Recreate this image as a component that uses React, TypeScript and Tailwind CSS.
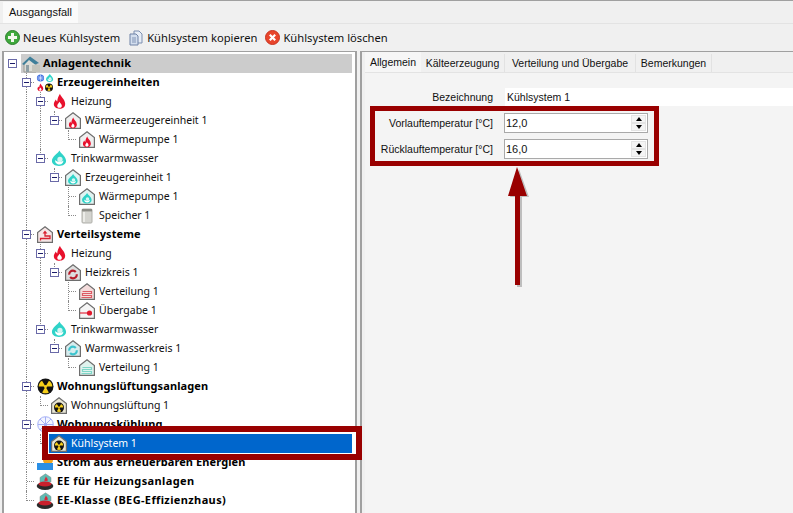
import React from "react";

const FONT = "font-['Noto_Sans','Liberation_Sans',sans-serif]";
const ARIAL = "font-['Liberation_Sans',sans-serif]";

type IconName =
  | "root" | "combo" | "flame" | "drop" | "hFlame" | "hDrop" | "tank" | "hUp" | "hCircleRed"
  | "hDist" | "hOut" | "hCircleTeal" | "hDistTeal" | "fan" | "hFan" | "snow" | "power" | "ee";

function Flame({ x = 0, y = 0, s = 1 }: { x?: number; y?: number; s?: number }) {
  return (
    <g transform={`translate(${x} ${y}) scale(${s})`}>
      <path d="M8.5 0C9 3 13.5 5.5 14 10C14.4 14 11.5 16 8 16C4.5 16 1.6 14 2 10.5C2.2 8.5 3.3 7.5 4 6C4.6 7 5 8 5.6 8.3C5.8 5 7 2.5 8.5 0Z" fill="#e8112d" />
      <path d="M8 8.5C8.6 10 10.6 11 10.5 13C10.4 14.4 9.2 15 8 15C6.8 15 5.6 14.4 5.6 13C5.6 11.2 7.3 10.2 8 8.5Z" fill="#fff" />
    </g>
  );
}

function Drop({ x = 0, y = 0, s = 1 }: { x?: number; y?: number; s?: number }) {
  return (
    <g transform={`translate(${x} ${y}) scale(${s})`}>
      <path d="M9 0C10 3 16 6 16 11C16 14.5 13 16.5 8.5 16.5C4 16.5 1 14.5 1 11C1 6.5 7 3.5 9 0Z" fill="#2fd3c8" />
      <path d="M4.5 10C4 13 6.4 14.8 9 14.8C11.6 14.8 13.4 13 13.2 10.6C11.5 12.6 7.5 13 4.5 10Z" fill="#fff" />
      <circle cx="9.5" cy="9.5" r="2.8" fill="#d4f6f3" />
    </g>
  );
}

function Fan({ cx, cy, r }: { cx: number; cy: number; r: number }) {
  const blade = "M0 0L-0.42 -0.74A0.85 0.85 0 0 1 0.42 -0.74Z";
  return (
    <g transform={`translate(${cx} ${cy}) scale(${r})`}>
      <circle r="1" fill="#111" />
      {[60, 180, 300].map((a) => (
        <path key={a} d={blade} fill="#f6cf1a" transform={`rotate(${a})`} />
      ))}
      <circle r="0.2" fill="#f6cf1a" />
    </g>
  );
}

function House({ fill = "#f2f2f2", children }: { fill?: string; children?: React.ReactNode }) {
  return (
    <svg width="16" height="17" viewBox="0 0 16 17" className="block">
      <path d="M8 0.8L15.4 6.5V16.3H0.6V6.5Z" fill={fill} stroke="#6d6d6d" strokeWidth="1.2" />
      {children}
    </svg>
  );
}

function Icon({ name }: { name: IconName }) {
  switch (name) {
    case "root":
      return (
        <svg width="20" height="18" viewBox="0 0 20 18" className="block">
          <path d="M3 17V8L9 3L15 8V17Z" fill="#dcdcd6" stroke="#9a9a94" />
          <path d="M1 9L9 1.5L18 8L14 9.5L8 5L3 10Z" fill="#3f7f9a" />
          <rect x="11" y="10" width="8" height="7" fill="#c4c4bc" />
          <path d="M5 10H8V17H5Z" fill="#8f9fa5" />
        </svg>
      );
    case "combo":
      return (
        <svg width="18" height="18" viewBox="0 0 18 18" className="block">
          <circle cx="4.5" cy="4" r="3.6" fill="#3f6fe0" />
          <path d="M4.5 0.8V7.2M1.4 4H7.6M2.3 1.8L6.7 6.2M6.7 1.8L2.3 6.2" stroke="#d9e4ff" strokeWidth="0.7" />
          <Drop x={9.5} y={0} s={0.48} />
          <Flame x={0.5} y={9.5} s={0.48} />
          <Fan cx={13} cy={13.5} r={4} />
        </svg>
      );
    case "flame":
      return (
        <svg width="15" height="17" viewBox="0 0 16 16.5" className="block">
          <Flame />
        </svg>
      );
    case "drop":
      return (
        <svg width="16" height="17" viewBox="0 0 17 17" className="block">
          <Drop />
        </svg>
      );
    case "hFlame":
      return (
        <House fill="#efefef">
          <Flame x={2.6} y={5.6} s={0.66} />
        </House>
      );
    case "hDrop":
      return (
        <House fill="#dff4f2">
          <Drop x={2.4} y={5} s={0.64} />
        </House>
      );
    case "tank":
      return (
        <svg width="12" height="16" viewBox="0 0 12 16" className="block">
          <rect x="1" y="1" width="10" height="14" rx="1" fill="#d4d4cf" stroke="#b0b0aa" />
          <rect x="1" y="1" width="10" height="2.4" fill="#8c8c86" />
          <rect x="2" y="4" width="2" height="10" fill="#ecece8" />
        </svg>
      );
    case "hUp":
      return (
        <House fill="#f6e6e6">
          <path d="M8 4.5L10.4 7.5H5.6Z" fill="#d8202f" />
          <path d="M8 7V10H13V12.5H3.5V14.5" fill="none" stroke="#d8202f" strokeWidth="1.3" />
        </House>
      );
    case "hDist":
      return (
        <House fill="#f4dcdc">
          <path d="M3.5 8.5H12.5V10.5H3.5V12.5H12.5V14.5H2.5" fill="none" stroke="#dc5a64" strokeWidth="1.2" />
        </House>
      );
    case "hOut":
      return (
        <House fill="#f5f5f5">
          <path d="M1 11H10" stroke="#e01a2e" strokeWidth="1.1" />
          <circle cx="10.5" cy="11" r="2.6" fill="#e01a2e" />
        </House>
      );
    case "hCircleRed":
      return (
        <House fill="#dedede">
          <circle cx="8" cy="10.5" r="3.8" fill="none" stroke="#b81c2a" strokeWidth="2.2" strokeDasharray="9 2.5" />
        </House>
      );
    case "hCircleTeal":
      return (
        <House fill="#d6ecee">
          <circle cx="8" cy="10.5" r="3.8" fill="none" stroke="#3cc4ce" strokeWidth="2.2" strokeDasharray="9 2.5" />
        </House>
      );
    case "hDistTeal":
      return (
        <House fill="#dff3ee">
          <path d="M3.5 8.5H12.5V10.5H3.5V12.5H12.5V14.5H2.5" fill="none" stroke="#7fd6c8" strokeWidth="1.2" />
        </House>
      );
    case "fan":
      return (
        <svg width="17" height="17" viewBox="0 0 17 17" className="block">
          <Fan cx={8.5} cy={8.5} r={8} />
        </svg>
      );
    case "hFan":
      return (
        <House fill="#e9e6d4">
          <Fan cx={8} cy={10.6} r={5} />
        </House>
      );
    case "snow":
      return (
        <svg width="17" height="17" viewBox="0 0 17 17" className="block">
          <circle cx="8.5" cy="8.5" r="7.8" fill="#f2f4ff" stroke="#a3aff5" />
          <path d="M8.5 1V16M1 8.5H16M3 3L14 14M14 3L3 14" stroke="#a3aff5" strokeWidth="1" />
        </svg>
      );
    case "power":
      return (
        <svg width="18" height="17" viewBox="0 0 18 17" className="block">
          <circle cx="12" cy="6" r="5" fill="#f2a51e" />
          <rect x="1" y="9" width="16" height="7" fill="#2a8fe6" />
        </svg>
      );
    default:
      return (
        <svg width="18" height="18" viewBox="0 0 18 18" className="block">
          <path d="M4 9V4.5L9.5 0.8L15 4.5V9Z" fill="#5fbcb4" stroke="#8a8a8a" strokeWidth="0.5" />
          <path d="M10 3C10 5 12.5 5.5 11.5 8H8.5C8 6.5 9.6 5 10 3Z" fill="#d82a3a" />
          <ellipse cx="9" cy="13" rx="8.3" ry="4" fill="#2a2a2a" />
          <ellipse cx="9" cy="11" rx="6.5" ry="2.6" fill="#c9202c" />
        </svg>
      );
  }
}

type Node = { t: string; i: IconName; b?: boolean; sel?: boolean; gray?: boolean; wide?: boolean; c?: Node[] };

const tree: Node = {
  t: "Anlagentechnik", i: "root", b: true, gray: true,
  c: [
    {
      t: "Erzeugereinheiten", i: "combo", b: true,
      c: [
        { t: "Heizung", i: "flame", c: [{ t: "Wärmeerzeugereinheit 1", i: "hFlame", c: [{ t: "Wärmepumpe 1", i: "hFlame" }] }] },
        {
          t: "Trinkwarmwasser", i: "drop",
          c: [{ t: "Erzeugereinheit 1", i: "hDrop", c: [{ t: "Wärmepumpe 1", i: "hDrop" }, { t: "Speicher 1", i: "tank" }] }],
        },
      ],
    },
    {
      t: "Verteilsysteme", i: "hUp", b: true,
      c: [
        {
          t: "Heizung", i: "flame",
          c: [{ t: "Heizkreis 1", i: "hCircleRed", c: [{ t: "Verteilung 1", i: "hDist" }, { t: "Übergabe 1", i: "hOut" }] }],
        },
        {
          t: "Trinkwarmwasser", i: "drop",
          c: [{ t: "Warmwasserkreis 1", i: "hCircleTeal", c: [{ t: "Verteilung 1", i: "hDistTeal" }] }],
        },
      ],
    },
    { t: "Wohnungslüftungsanlagen", i: "fan", b: true, c: [{ t: "Wohnungslüftung 1", i: "hFan" }] },
    { t: "Wohnungskühlung", i: "snow", b: true, c: [{ t: "Kühlsystem 1", i: "hFan", sel: true }] },
    { t: "Strom aus erneuerbaren Energien", i: "power", b: true },
    { t: "EE für Heizungsanlagen", i: "ee", b: true, wide: true },
    { t: "EE-Klasse (BEG-Effizienzhaus)", i: "ee", b: true, wide: true },
  ],
};

type Row = { n: Node; guides: boolean[]; last: boolean; depth: number };

function flatten(n: Node, guides: boolean[], last: boolean, depth: number, out: Row[]) {
  out.push({ n, guides, last, depth });
  const kids = n.c ?? [];
  kids.forEach((k, i) => flatten(k, depth === 0 ? [false] : [...guides, !last], i === kids.length - 1, depth + 1, out));
  return out;
}

const rows = flatten(tree, [], true, 0, []);

function TreeRow({ r }: { r: Row }) {
  const { n, depth, guides, last } = r;
  return (
    <div className="flex h-[19px] items-center">
      {guides.map((g, i) => (
        <div key={i} className="h-full w-[14px] shrink-0">
          {g && <div className="h-full w-[8px] border-r border-dotted border-[#8a8a8a]" />}
        </div>
      ))}
      <div className="relative h-full w-[14px] shrink-0">
        {depth > 0 && (
          <>
            <div className={`absolute left-0 top-0 w-[8px] border-r border-dotted border-[#8a8a8a] ${last ? "h-[10px]" : "h-full"}`} />
            <div className="absolute left-[8px] top-[9px] h-0 w-[7px] border-t border-dotted border-[#8a8a8a]" />
          </>
        )}
        {n.c && (
          <div className="absolute left-[3px] top-[5px] flex h-[9px] w-[9px] items-center justify-center border border-[#6a6aa8] bg-white">
            <div className="h-px w-[5px] bg-[#1c1c6a]" />
          </div>
        )}
      </div>
      <div className={`ml-[2px] flex h-full min-w-0 flex-1 items-center ${n.sel ? "bg-[#0066cc] text-white" : n.gray ? "bg-[#cccccc] text-black" : "text-[#101010]"}`}>
        <div className="flex w-[22px] shrink-0 items-center justify-center pr-[2px]">
          <Icon name={n.i} />
        </div>
        <span className={`whitespace-nowrap leading-none ${n.b ? "mb-[2px] text-[11px] font-bold text-black" : "text-[10.5px]"} ${n.wide ? "tracking-[0.38px]" : n.b ? "tracking-[0.1px]" : ""} ${n.sel ? "text-white" : ""}`}>{n.t}</span>
      </div>
    </div>
  );
}

function Spin({ value }: { value: string }) {
  return (
    <div className="flex h-[20px] w-[144px] items-center justify-between border border-[#a9a9a9] bg-white pl-[1px] pr-[1px]">
      <span className="text-[11px] leading-none text-[#111]">{value}</span>
      <div className="flex h-[16px] w-[15px] flex-col justify-between">
        <div className="flex h-[8px] items-center justify-center border border-[#e4e4e4] bg-[#f4f4f4]">
          <div className="h-0 w-0 border-x-[3px] border-b-[4px] border-x-transparent border-b-black" />
        </div>
        <div className="flex h-[8px] items-center justify-center border border-[#e4e4e4] bg-[#f4f4f4]">
          <div className="h-0 w-0 border-x-[3px] border-t-[4px] border-x-transparent border-t-black" />
        </div>
      </div>
    </div>
  );
}

export default function App() {
  return (
    <div className={`relative flex h-[513px] w-[793px] flex-col overflow-hidden border-t border-[#a0a0a0] bg-[#f0f0f0] text-[12px] text-[#111] ${FONT}`}>
      <div className="flex h-[23px] items-end border-b border-[#e3e3e3] pl-[3px] pt-[2px]">
        <div className={`flex h-[21px] w-[75px] items-center justify-center bg-[#fafafa] text-[11px] leading-none ${ARIAL}`}>Ausgangsfall</div>
      </div>
      <div className="flex h-[27px] items-center gap-[8px] pl-[5px] text-[11.2px] leading-none">
        <div className="flex items-center gap-[3px]">
          <svg width="15" height="15" viewBox="0 0 15 15" className="block">
            <circle cx="7.5" cy="7.5" r="7" fill="#3fa93c" stroke="#2b7f2b" />
            <path d="M6 3H9V6H12V9H9V12H6V9H3V6H6Z" fill="#f3f8ee" />
          </svg>
          <span>Neues Kühlsystem</span>
        </div>
        <div className="flex items-center gap-[3px]">
          <svg width="16" height="16" viewBox="0 0 16 16" className="block">
            <path d="M6 1H11L14 4V13H6Z" fill="#e7edf6" stroke="#7c8fb0" />
            <path d="M2 4H8L10 6V15H2Z" fill="#d3deee" stroke="#6f82a6" />
            <path d="M4 8H8M4 10H8M4 12H8" stroke="#8194b5" />
          </svg>
          <span>Kühlsystem kopieren</span>
        </div>
        <div className="flex items-center gap-[3px]">
          <svg width="15" height="15" viewBox="0 0 15 15" className="block">
            <circle cx="7.5" cy="7.5" r="7" fill="#e8452c" stroke="#c8331f" />
            <path d="M4.8 4.8L10.2 10.2M10.2 4.8L4.8 10.2" stroke="#fff" strokeWidth="2.2" />
          </svg>
          <span>Kühlsystem löschen</span>
        </div>
      </div>
      <div className="flex min-h-0 flex-1 gap-[3px] pl-[2px]">
        <div className="h-full w-[355px] overflow-hidden border-x-2 border-t border-[#a0a0a0] bg-white pl-[1px] pt-[2px]">
          <div className="w-[347px]">
            {rows.map((r, i) => (
              <TreeRow key={i} r={r} />
            ))}
          </div>
        </div>
        <div className={`flex h-full min-w-0 flex-1 flex-col border-l-2 border-t border-[#a0a0a0] ${ARIAL}`}>
          <div className="flex h-[20px] items-end pl-[3px] text-[10.5px] leading-none">
            <div className="flex h-[20px] w-[56px] items-center justify-center bg-[#f6f6f6]">Allgemein</div>
            <div className="flex h-[18px] w-[84px] items-center justify-center border-r border-[#e2e2e2] pt-[1px]">Kälteerzeugung</div>
            <div className="flex h-[18px] w-[131px] items-center justify-center border-r border-[#e2e2e2] pt-[1px]">Verteilung und Übergabe</div>
            <div className="flex h-[18px] w-[76px] items-center justify-center border-r border-[#e2e2e2] pt-[1px]">Bemerkungen</div>
          </div>
          <div className="ml-[3px] flex-1 border-t border-[#e3e3e3] bg-[#f4f4f4] pt-[15px] text-[10.5px] leading-none">
            <div className="flex h-[18px] items-center pt-0">
              <span className="w-[128px] shrink-0 pt-[1px] text-right">Bezeichnung</span>
              <div className="ml-[12px] flex h-full flex-1 items-center bg-white pl-[2px] pt-[1px]">Kühlsystem 1</div>
            </div>
            <div className="mt-[7px] flex h-[20px] items-center">
              <span className="w-[128px] shrink-0 text-right">Vorlauftemperatur [°C]</span>
              <div className="ml-[11px]"><Spin value="12,0" /></div>
            </div>
            <div className="mt-[6px] flex h-[20px] items-center">
              <span className="w-[128px] shrink-0 text-right">Rücklauftemperatur [°C]</span>
              <div className="ml-[11px]"><Spin value="16,0" /></div>
            </div>
          </div>
        </div>
      </div>
      {/* annotations */}
      <div className="pointer-events-none absolute left-[42px] top-[425px] h-[34px] w-[320px] border-[6px] border-[#990000]">
        <div className="h-full w-full border-b-[1px] border-l-[1px] border-r-[4px] border-t-2 border-white" />
      </div>
      <div className="pointer-events-none absolute left-[370px] top-[105px] h-[60px] w-[289px] border-[5px] border-[#990000]" />
      <svg className="pointer-events-none absolute left-[500px] top-[164px]" width="36" height="126" viewBox="0 0 36 126">
        <path d="M19 4L29 32H22V122H17V32H10Z" fill="#000" opacity="0.22" />
        <path d="M17 2L27 31H20V120H15V31H8Z" fill="#990000" />
      </svg>
    </div>
  );
}
